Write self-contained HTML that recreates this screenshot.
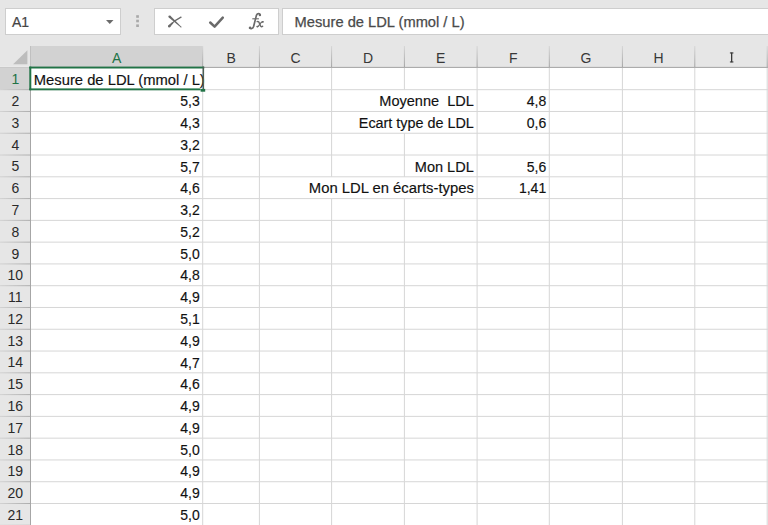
<!DOCTYPE html><html><head><meta charset="utf-8"><style>html,body{margin:0;padding:0;background:#e6e6e6;overflow:hidden}svg{display:block}text{font-family:"Liberation Sans",sans-serif}</style></head><body>
<svg width="768" height="525" viewBox="0 0 768 525">
<defs><linearGradient id="sepg" x1="0" y1="0" x2="0" y2="1"><stop offset="0" stop-color="#d6d6d6"/><stop offset="1" stop-color="#a2a2a2"/></linearGradient><linearGradient id="rsepg" x1="0" y1="0" x2="1" y2="0"><stop offset="0" stop-color="#d2d2d2"/><stop offset="1" stop-color="#acacac"/></linearGradient></defs>
<rect x="0" y="0" width="768" height="525" fill="#e6e6e6"/>
<rect x="5.5" y="8.5" width="115" height="26" fill="#fff" stroke="#cecece" stroke-width="1"/>
<text x="12" y="26.7" font-size="14" fill="#444" stroke="#444" stroke-width="0.2">A1</text>
<path d="M106 20 L113.5 20 L109.75 24 Z" fill="#6b6b6b"/>
<rect x="136.2" y="15.2" width="2.7" height="2.6" fill="#a9a9a9"/>
<rect x="136.2" y="19.7" width="2.7" height="2.6" fill="#a9a9a9"/>
<rect x="136.2" y="24.4" width="2.7" height="2.6" fill="#a9a9a9"/>
<rect x="154.5" y="8.5" width="124" height="26" fill="#fff" stroke="#cecece" stroke-width="1"/>
<path d="M168.79 17.49 L180.66 27.37 L181.34 26.63 L170.41 15.71Z" fill="#6a6a6a"/>
<circle cx="169.6" cy="16.6" r="1.2" fill="#6a6a6a"/>
<circle cx="181.0" cy="27.0" r="0.5" fill="#6a6a6a"/>
<path d="M169.2 26.2 Q174 20.5 181.0 17.2" stroke="#6a6a6a" stroke-width="1.4" fill="none" stroke-linecap="round"/>
<path d="M170.04 27.06 L173.06 23.57 L171.94 22.43 L168.36 25.34Z" fill="#6a6a6a"/>
<circle cx="169.2" cy="26.2" r="1.2" fill="#6a6a6a"/>
<circle cx="172.5" cy="23.0" r="0.8" fill="#6a6a6a"/>
<path d="M210.2 22.5 L214.6 26.6 L222.8 17.6" stroke="#6a6a6a" stroke-width="2.5" fill="none" stroke-linejoin="round" stroke-linecap="round"/>
<path d="M260.2 15.0 C260.0 13.2 257.4 12.9 256.4 15.4 L253.6 26.4 C252.8 28.8 250.8 29.2 249.6 28.0" stroke="#6a6a6a" stroke-width="1.7" fill="none" stroke-linecap="round"/>
<circle cx="259.9" cy="15.1" r="1.2" fill="#6a6a6a"/><circle cx="250.1" cy="27.8" r="1.2" fill="#6a6a6a"/>
<path d="M252.3 18.8 L258.9 18.8" stroke="#6a6a6a" stroke-width="1.1"/>
<path d="M257.2 21.6 C258.4 21.2 259.0 22.0 259.5 23.4 L260.6 26.0 C261.0 26.9 261.8 27.0 262.6 26.2" stroke="#6a6a6a" stroke-width="1.5" fill="none" stroke-linecap="round"/>
<path d="M263.0 21.6 C261.8 21.4 260.2 23.4 258.8 25.6 C258.2 26.6 257.6 27.0 257.0 26.4" stroke="#6a6a6a" stroke-width="1.1" fill="none" stroke-linecap="round"/>
<circle cx="262.8" cy="21.9" r="0.9" fill="#6a6a6a"/><circle cx="257.4" cy="26.6" r="0.9" fill="#6a6a6a"/>
<rect x="282.5" y="8.5" width="500" height="26" fill="#fff" stroke="#cecece" stroke-width="1"/>
<text x="294.6" y="27.4" font-size="14" fill="#4a4a4a" stroke="#4a4a4a" stroke-width="0.25" textLength="170" lengthAdjust="spacingAndGlyphs">Mesure de LDL (mmol / L)</text>
<rect x="30.5" y="67.0" width="768" height="525" fill="#fff"/>
<rect x="30.5" y="46.0" width="172.2" height="21.0" fill="#d2d2d2"/>
<rect x="0" y="67.9" width="30.5" height="21.78" fill="#d2d2d2"/>
<path d="M27.4 50.3 L27.4 64.2 L13.1 64.2 Z" fill="#bdbdbd"/>
<line x1="202.7" y1="67.9" x2="202.7" y2="89.68" stroke="#d6d6d6" stroke-width="1"/>
<line x1="202.7" y1="89.68" x2="202.7" y2="111.46000000000001" stroke="#d6d6d6" stroke-width="1"/>
<line x1="202.7" y1="111.46000000000001" x2="202.7" y2="133.24" stroke="#d6d6d6" stroke-width="1"/>
<line x1="202.7" y1="133.24" x2="202.7" y2="155.02" stroke="#d6d6d6" stroke-width="1"/>
<line x1="202.7" y1="155.02" x2="202.7" y2="176.8" stroke="#d6d6d6" stroke-width="1"/>
<line x1="202.7" y1="176.8" x2="202.7" y2="198.58" stroke="#d6d6d6" stroke-width="1"/>
<line x1="202.7" y1="198.58" x2="202.7" y2="220.36" stroke="#d6d6d6" stroke-width="1"/>
<line x1="202.7" y1="220.36" x2="202.7" y2="242.14000000000001" stroke="#d6d6d6" stroke-width="1"/>
<line x1="202.7" y1="242.14000000000001" x2="202.7" y2="263.92" stroke="#d6d6d6" stroke-width="1"/>
<line x1="202.7" y1="263.92" x2="202.7" y2="285.70000000000005" stroke="#d6d6d6" stroke-width="1"/>
<line x1="202.7" y1="285.70000000000005" x2="202.7" y2="307.48" stroke="#d6d6d6" stroke-width="1"/>
<line x1="202.7" y1="307.48" x2="202.7" y2="329.26" stroke="#d6d6d6" stroke-width="1"/>
<line x1="202.7" y1="329.26" x2="202.7" y2="351.03999999999996" stroke="#d6d6d6" stroke-width="1"/>
<line x1="202.7" y1="351.03999999999996" x2="202.7" y2="372.82000000000005" stroke="#d6d6d6" stroke-width="1"/>
<line x1="202.7" y1="372.82000000000005" x2="202.7" y2="394.6" stroke="#d6d6d6" stroke-width="1"/>
<line x1="202.7" y1="394.6" x2="202.7" y2="416.38" stroke="#d6d6d6" stroke-width="1"/>
<line x1="202.7" y1="416.38" x2="202.7" y2="438.15999999999997" stroke="#d6d6d6" stroke-width="1"/>
<line x1="202.7" y1="438.15999999999997" x2="202.7" y2="459.94000000000005" stroke="#d6d6d6" stroke-width="1"/>
<line x1="202.7" y1="459.94000000000005" x2="202.7" y2="481.72" stroke="#d6d6d6" stroke-width="1"/>
<line x1="202.7" y1="481.72" x2="202.7" y2="503.5" stroke="#d6d6d6" stroke-width="1"/>
<line x1="202.7" y1="503.5" x2="202.7" y2="525.28" stroke="#d6d6d6" stroke-width="1"/>
<line x1="202.7" y1="525.28" x2="202.7" y2="547.0600000000001" stroke="#d6d6d6" stroke-width="1"/>
<line x1="259.4" y1="67.9" x2="259.4" y2="89.68" stroke="#d6d6d6" stroke-width="1"/>
<line x1="259.4" y1="89.68" x2="259.4" y2="111.46000000000001" stroke="#d6d6d6" stroke-width="1"/>
<line x1="259.4" y1="111.46000000000001" x2="259.4" y2="133.24" stroke="#d6d6d6" stroke-width="1"/>
<line x1="259.4" y1="133.24" x2="259.4" y2="155.02" stroke="#d6d6d6" stroke-width="1"/>
<line x1="259.4" y1="155.02" x2="259.4" y2="176.8" stroke="#d6d6d6" stroke-width="1"/>
<line x1="259.4" y1="176.8" x2="259.4" y2="198.58" stroke="#d6d6d6" stroke-width="1"/>
<line x1="259.4" y1="198.58" x2="259.4" y2="220.36" stroke="#d6d6d6" stroke-width="1"/>
<line x1="259.4" y1="220.36" x2="259.4" y2="242.14000000000001" stroke="#d6d6d6" stroke-width="1"/>
<line x1="259.4" y1="242.14000000000001" x2="259.4" y2="263.92" stroke="#d6d6d6" stroke-width="1"/>
<line x1="259.4" y1="263.92" x2="259.4" y2="285.70000000000005" stroke="#d6d6d6" stroke-width="1"/>
<line x1="259.4" y1="285.70000000000005" x2="259.4" y2="307.48" stroke="#d6d6d6" stroke-width="1"/>
<line x1="259.4" y1="307.48" x2="259.4" y2="329.26" stroke="#d6d6d6" stroke-width="1"/>
<line x1="259.4" y1="329.26" x2="259.4" y2="351.03999999999996" stroke="#d6d6d6" stroke-width="1"/>
<line x1="259.4" y1="351.03999999999996" x2="259.4" y2="372.82000000000005" stroke="#d6d6d6" stroke-width="1"/>
<line x1="259.4" y1="372.82000000000005" x2="259.4" y2="394.6" stroke="#d6d6d6" stroke-width="1"/>
<line x1="259.4" y1="394.6" x2="259.4" y2="416.38" stroke="#d6d6d6" stroke-width="1"/>
<line x1="259.4" y1="416.38" x2="259.4" y2="438.15999999999997" stroke="#d6d6d6" stroke-width="1"/>
<line x1="259.4" y1="438.15999999999997" x2="259.4" y2="459.94000000000005" stroke="#d6d6d6" stroke-width="1"/>
<line x1="259.4" y1="459.94000000000005" x2="259.4" y2="481.72" stroke="#d6d6d6" stroke-width="1"/>
<line x1="259.4" y1="481.72" x2="259.4" y2="503.5" stroke="#d6d6d6" stroke-width="1"/>
<line x1="259.4" y1="503.5" x2="259.4" y2="525.28" stroke="#d6d6d6" stroke-width="1"/>
<line x1="259.4" y1="525.28" x2="259.4" y2="547.0600000000001" stroke="#d6d6d6" stroke-width="1"/>
<line x1="331.6" y1="67.9" x2="331.6" y2="89.68" stroke="#d6d6d6" stroke-width="1"/>
<line x1="331.6" y1="89.68" x2="331.6" y2="111.46000000000001" stroke="#d6d6d6" stroke-width="1"/>
<line x1="331.6" y1="111.46000000000001" x2="331.6" y2="133.24" stroke="#d6d6d6" stroke-width="1"/>
<line x1="331.6" y1="133.24" x2="331.6" y2="155.02" stroke="#d6d6d6" stroke-width="1"/>
<line x1="331.6" y1="155.02" x2="331.6" y2="176.8" stroke="#d6d6d6" stroke-width="1"/>
<line x1="331.6" y1="198.58" x2="331.6" y2="220.36" stroke="#d6d6d6" stroke-width="1"/>
<line x1="331.6" y1="220.36" x2="331.6" y2="242.14000000000001" stroke="#d6d6d6" stroke-width="1"/>
<line x1="331.6" y1="242.14000000000001" x2="331.6" y2="263.92" stroke="#d6d6d6" stroke-width="1"/>
<line x1="331.6" y1="263.92" x2="331.6" y2="285.70000000000005" stroke="#d6d6d6" stroke-width="1"/>
<line x1="331.6" y1="285.70000000000005" x2="331.6" y2="307.48" stroke="#d6d6d6" stroke-width="1"/>
<line x1="331.6" y1="307.48" x2="331.6" y2="329.26" stroke="#d6d6d6" stroke-width="1"/>
<line x1="331.6" y1="329.26" x2="331.6" y2="351.03999999999996" stroke="#d6d6d6" stroke-width="1"/>
<line x1="331.6" y1="351.03999999999996" x2="331.6" y2="372.82000000000005" stroke="#d6d6d6" stroke-width="1"/>
<line x1="331.6" y1="372.82000000000005" x2="331.6" y2="394.6" stroke="#d6d6d6" stroke-width="1"/>
<line x1="331.6" y1="394.6" x2="331.6" y2="416.38" stroke="#d6d6d6" stroke-width="1"/>
<line x1="331.6" y1="416.38" x2="331.6" y2="438.15999999999997" stroke="#d6d6d6" stroke-width="1"/>
<line x1="331.6" y1="438.15999999999997" x2="331.6" y2="459.94000000000005" stroke="#d6d6d6" stroke-width="1"/>
<line x1="331.6" y1="459.94000000000005" x2="331.6" y2="481.72" stroke="#d6d6d6" stroke-width="1"/>
<line x1="331.6" y1="481.72" x2="331.6" y2="503.5" stroke="#d6d6d6" stroke-width="1"/>
<line x1="331.6" y1="503.5" x2="331.6" y2="525.28" stroke="#d6d6d6" stroke-width="1"/>
<line x1="331.6" y1="525.28" x2="331.6" y2="547.0600000000001" stroke="#d6d6d6" stroke-width="1"/>
<line x1="404.4" y1="67.9" x2="404.4" y2="89.68" stroke="#d6d6d6" stroke-width="1"/>
<line x1="404.4" y1="133.24" x2="404.4" y2="155.02" stroke="#d6d6d6" stroke-width="1"/>
<line x1="404.4" y1="155.02" x2="404.4" y2="176.8" stroke="#d6d6d6" stroke-width="1"/>
<line x1="404.4" y1="198.58" x2="404.4" y2="220.36" stroke="#d6d6d6" stroke-width="1"/>
<line x1="404.4" y1="220.36" x2="404.4" y2="242.14000000000001" stroke="#d6d6d6" stroke-width="1"/>
<line x1="404.4" y1="242.14000000000001" x2="404.4" y2="263.92" stroke="#d6d6d6" stroke-width="1"/>
<line x1="404.4" y1="263.92" x2="404.4" y2="285.70000000000005" stroke="#d6d6d6" stroke-width="1"/>
<line x1="404.4" y1="285.70000000000005" x2="404.4" y2="307.48" stroke="#d6d6d6" stroke-width="1"/>
<line x1="404.4" y1="307.48" x2="404.4" y2="329.26" stroke="#d6d6d6" stroke-width="1"/>
<line x1="404.4" y1="329.26" x2="404.4" y2="351.03999999999996" stroke="#d6d6d6" stroke-width="1"/>
<line x1="404.4" y1="351.03999999999996" x2="404.4" y2="372.82000000000005" stroke="#d6d6d6" stroke-width="1"/>
<line x1="404.4" y1="372.82000000000005" x2="404.4" y2="394.6" stroke="#d6d6d6" stroke-width="1"/>
<line x1="404.4" y1="394.6" x2="404.4" y2="416.38" stroke="#d6d6d6" stroke-width="1"/>
<line x1="404.4" y1="416.38" x2="404.4" y2="438.15999999999997" stroke="#d6d6d6" stroke-width="1"/>
<line x1="404.4" y1="438.15999999999997" x2="404.4" y2="459.94000000000005" stroke="#d6d6d6" stroke-width="1"/>
<line x1="404.4" y1="459.94000000000005" x2="404.4" y2="481.72" stroke="#d6d6d6" stroke-width="1"/>
<line x1="404.4" y1="481.72" x2="404.4" y2="503.5" stroke="#d6d6d6" stroke-width="1"/>
<line x1="404.4" y1="503.5" x2="404.4" y2="525.28" stroke="#d6d6d6" stroke-width="1"/>
<line x1="404.4" y1="525.28" x2="404.4" y2="547.0600000000001" stroke="#d6d6d6" stroke-width="1"/>
<line x1="477.1" y1="67.9" x2="477.1" y2="89.68" stroke="#d6d6d6" stroke-width="1"/>
<line x1="477.1" y1="89.68" x2="477.1" y2="111.46000000000001" stroke="#d6d6d6" stroke-width="1"/>
<line x1="477.1" y1="111.46000000000001" x2="477.1" y2="133.24" stroke="#d6d6d6" stroke-width="1"/>
<line x1="477.1" y1="133.24" x2="477.1" y2="155.02" stroke="#d6d6d6" stroke-width="1"/>
<line x1="477.1" y1="155.02" x2="477.1" y2="176.8" stroke="#d6d6d6" stroke-width="1"/>
<line x1="477.1" y1="176.8" x2="477.1" y2="198.58" stroke="#d6d6d6" stroke-width="1"/>
<line x1="477.1" y1="198.58" x2="477.1" y2="220.36" stroke="#d6d6d6" stroke-width="1"/>
<line x1="477.1" y1="220.36" x2="477.1" y2="242.14000000000001" stroke="#d6d6d6" stroke-width="1"/>
<line x1="477.1" y1="242.14000000000001" x2="477.1" y2="263.92" stroke="#d6d6d6" stroke-width="1"/>
<line x1="477.1" y1="263.92" x2="477.1" y2="285.70000000000005" stroke="#d6d6d6" stroke-width="1"/>
<line x1="477.1" y1="285.70000000000005" x2="477.1" y2="307.48" stroke="#d6d6d6" stroke-width="1"/>
<line x1="477.1" y1="307.48" x2="477.1" y2="329.26" stroke="#d6d6d6" stroke-width="1"/>
<line x1="477.1" y1="329.26" x2="477.1" y2="351.03999999999996" stroke="#d6d6d6" stroke-width="1"/>
<line x1="477.1" y1="351.03999999999996" x2="477.1" y2="372.82000000000005" stroke="#d6d6d6" stroke-width="1"/>
<line x1="477.1" y1="372.82000000000005" x2="477.1" y2="394.6" stroke="#d6d6d6" stroke-width="1"/>
<line x1="477.1" y1="394.6" x2="477.1" y2="416.38" stroke="#d6d6d6" stroke-width="1"/>
<line x1="477.1" y1="416.38" x2="477.1" y2="438.15999999999997" stroke="#d6d6d6" stroke-width="1"/>
<line x1="477.1" y1="438.15999999999997" x2="477.1" y2="459.94000000000005" stroke="#d6d6d6" stroke-width="1"/>
<line x1="477.1" y1="459.94000000000005" x2="477.1" y2="481.72" stroke="#d6d6d6" stroke-width="1"/>
<line x1="477.1" y1="481.72" x2="477.1" y2="503.5" stroke="#d6d6d6" stroke-width="1"/>
<line x1="477.1" y1="503.5" x2="477.1" y2="525.28" stroke="#d6d6d6" stroke-width="1"/>
<line x1="477.1" y1="525.28" x2="477.1" y2="547.0600000000001" stroke="#d6d6d6" stroke-width="1"/>
<line x1="549.3" y1="67.9" x2="549.3" y2="89.68" stroke="#d6d6d6" stroke-width="1"/>
<line x1="549.3" y1="89.68" x2="549.3" y2="111.46000000000001" stroke="#d6d6d6" stroke-width="1"/>
<line x1="549.3" y1="111.46000000000001" x2="549.3" y2="133.24" stroke="#d6d6d6" stroke-width="1"/>
<line x1="549.3" y1="133.24" x2="549.3" y2="155.02" stroke="#d6d6d6" stroke-width="1"/>
<line x1="549.3" y1="155.02" x2="549.3" y2="176.8" stroke="#d6d6d6" stroke-width="1"/>
<line x1="549.3" y1="176.8" x2="549.3" y2="198.58" stroke="#d6d6d6" stroke-width="1"/>
<line x1="549.3" y1="198.58" x2="549.3" y2="220.36" stroke="#d6d6d6" stroke-width="1"/>
<line x1="549.3" y1="220.36" x2="549.3" y2="242.14000000000001" stroke="#d6d6d6" stroke-width="1"/>
<line x1="549.3" y1="242.14000000000001" x2="549.3" y2="263.92" stroke="#d6d6d6" stroke-width="1"/>
<line x1="549.3" y1="263.92" x2="549.3" y2="285.70000000000005" stroke="#d6d6d6" stroke-width="1"/>
<line x1="549.3" y1="285.70000000000005" x2="549.3" y2="307.48" stroke="#d6d6d6" stroke-width="1"/>
<line x1="549.3" y1="307.48" x2="549.3" y2="329.26" stroke="#d6d6d6" stroke-width="1"/>
<line x1="549.3" y1="329.26" x2="549.3" y2="351.03999999999996" stroke="#d6d6d6" stroke-width="1"/>
<line x1="549.3" y1="351.03999999999996" x2="549.3" y2="372.82000000000005" stroke="#d6d6d6" stroke-width="1"/>
<line x1="549.3" y1="372.82000000000005" x2="549.3" y2="394.6" stroke="#d6d6d6" stroke-width="1"/>
<line x1="549.3" y1="394.6" x2="549.3" y2="416.38" stroke="#d6d6d6" stroke-width="1"/>
<line x1="549.3" y1="416.38" x2="549.3" y2="438.15999999999997" stroke="#d6d6d6" stroke-width="1"/>
<line x1="549.3" y1="438.15999999999997" x2="549.3" y2="459.94000000000005" stroke="#d6d6d6" stroke-width="1"/>
<line x1="549.3" y1="459.94000000000005" x2="549.3" y2="481.72" stroke="#d6d6d6" stroke-width="1"/>
<line x1="549.3" y1="481.72" x2="549.3" y2="503.5" stroke="#d6d6d6" stroke-width="1"/>
<line x1="549.3" y1="503.5" x2="549.3" y2="525.28" stroke="#d6d6d6" stroke-width="1"/>
<line x1="549.3" y1="525.28" x2="549.3" y2="547.0600000000001" stroke="#d6d6d6" stroke-width="1"/>
<line x1="622.4" y1="67.9" x2="622.4" y2="89.68" stroke="#d6d6d6" stroke-width="1"/>
<line x1="622.4" y1="89.68" x2="622.4" y2="111.46000000000001" stroke="#d6d6d6" stroke-width="1"/>
<line x1="622.4" y1="111.46000000000001" x2="622.4" y2="133.24" stroke="#d6d6d6" stroke-width="1"/>
<line x1="622.4" y1="133.24" x2="622.4" y2="155.02" stroke="#d6d6d6" stroke-width="1"/>
<line x1="622.4" y1="155.02" x2="622.4" y2="176.8" stroke="#d6d6d6" stroke-width="1"/>
<line x1="622.4" y1="176.8" x2="622.4" y2="198.58" stroke="#d6d6d6" stroke-width="1"/>
<line x1="622.4" y1="198.58" x2="622.4" y2="220.36" stroke="#d6d6d6" stroke-width="1"/>
<line x1="622.4" y1="220.36" x2="622.4" y2="242.14000000000001" stroke="#d6d6d6" stroke-width="1"/>
<line x1="622.4" y1="242.14000000000001" x2="622.4" y2="263.92" stroke="#d6d6d6" stroke-width="1"/>
<line x1="622.4" y1="263.92" x2="622.4" y2="285.70000000000005" stroke="#d6d6d6" stroke-width="1"/>
<line x1="622.4" y1="285.70000000000005" x2="622.4" y2="307.48" stroke="#d6d6d6" stroke-width="1"/>
<line x1="622.4" y1="307.48" x2="622.4" y2="329.26" stroke="#d6d6d6" stroke-width="1"/>
<line x1="622.4" y1="329.26" x2="622.4" y2="351.03999999999996" stroke="#d6d6d6" stroke-width="1"/>
<line x1="622.4" y1="351.03999999999996" x2="622.4" y2="372.82000000000005" stroke="#d6d6d6" stroke-width="1"/>
<line x1="622.4" y1="372.82000000000005" x2="622.4" y2="394.6" stroke="#d6d6d6" stroke-width="1"/>
<line x1="622.4" y1="394.6" x2="622.4" y2="416.38" stroke="#d6d6d6" stroke-width="1"/>
<line x1="622.4" y1="416.38" x2="622.4" y2="438.15999999999997" stroke="#d6d6d6" stroke-width="1"/>
<line x1="622.4" y1="438.15999999999997" x2="622.4" y2="459.94000000000005" stroke="#d6d6d6" stroke-width="1"/>
<line x1="622.4" y1="459.94000000000005" x2="622.4" y2="481.72" stroke="#d6d6d6" stroke-width="1"/>
<line x1="622.4" y1="481.72" x2="622.4" y2="503.5" stroke="#d6d6d6" stroke-width="1"/>
<line x1="622.4" y1="503.5" x2="622.4" y2="525.28" stroke="#d6d6d6" stroke-width="1"/>
<line x1="622.4" y1="525.28" x2="622.4" y2="547.0600000000001" stroke="#d6d6d6" stroke-width="1"/>
<line x1="694.8" y1="67.9" x2="694.8" y2="89.68" stroke="#d6d6d6" stroke-width="1"/>
<line x1="694.8" y1="89.68" x2="694.8" y2="111.46000000000001" stroke="#d6d6d6" stroke-width="1"/>
<line x1="694.8" y1="111.46000000000001" x2="694.8" y2="133.24" stroke="#d6d6d6" stroke-width="1"/>
<line x1="694.8" y1="133.24" x2="694.8" y2="155.02" stroke="#d6d6d6" stroke-width="1"/>
<line x1="694.8" y1="155.02" x2="694.8" y2="176.8" stroke="#d6d6d6" stroke-width="1"/>
<line x1="694.8" y1="176.8" x2="694.8" y2="198.58" stroke="#d6d6d6" stroke-width="1"/>
<line x1="694.8" y1="198.58" x2="694.8" y2="220.36" stroke="#d6d6d6" stroke-width="1"/>
<line x1="694.8" y1="220.36" x2="694.8" y2="242.14000000000001" stroke="#d6d6d6" stroke-width="1"/>
<line x1="694.8" y1="242.14000000000001" x2="694.8" y2="263.92" stroke="#d6d6d6" stroke-width="1"/>
<line x1="694.8" y1="263.92" x2="694.8" y2="285.70000000000005" stroke="#d6d6d6" stroke-width="1"/>
<line x1="694.8" y1="285.70000000000005" x2="694.8" y2="307.48" stroke="#d6d6d6" stroke-width="1"/>
<line x1="694.8" y1="307.48" x2="694.8" y2="329.26" stroke="#d6d6d6" stroke-width="1"/>
<line x1="694.8" y1="329.26" x2="694.8" y2="351.03999999999996" stroke="#d6d6d6" stroke-width="1"/>
<line x1="694.8" y1="351.03999999999996" x2="694.8" y2="372.82000000000005" stroke="#d6d6d6" stroke-width="1"/>
<line x1="694.8" y1="372.82000000000005" x2="694.8" y2="394.6" stroke="#d6d6d6" stroke-width="1"/>
<line x1="694.8" y1="394.6" x2="694.8" y2="416.38" stroke="#d6d6d6" stroke-width="1"/>
<line x1="694.8" y1="416.38" x2="694.8" y2="438.15999999999997" stroke="#d6d6d6" stroke-width="1"/>
<line x1="694.8" y1="438.15999999999997" x2="694.8" y2="459.94000000000005" stroke="#d6d6d6" stroke-width="1"/>
<line x1="694.8" y1="459.94000000000005" x2="694.8" y2="481.72" stroke="#d6d6d6" stroke-width="1"/>
<line x1="694.8" y1="481.72" x2="694.8" y2="503.5" stroke="#d6d6d6" stroke-width="1"/>
<line x1="694.8" y1="503.5" x2="694.8" y2="525.28" stroke="#d6d6d6" stroke-width="1"/>
<line x1="694.8" y1="525.28" x2="694.8" y2="547.0600000000001" stroke="#d6d6d6" stroke-width="1"/>
<line x1="767.2" y1="67.9" x2="767.2" y2="89.68" stroke="#d6d6d6" stroke-width="1"/>
<line x1="767.2" y1="89.68" x2="767.2" y2="111.46000000000001" stroke="#d6d6d6" stroke-width="1"/>
<line x1="767.2" y1="111.46000000000001" x2="767.2" y2="133.24" stroke="#d6d6d6" stroke-width="1"/>
<line x1="767.2" y1="133.24" x2="767.2" y2="155.02" stroke="#d6d6d6" stroke-width="1"/>
<line x1="767.2" y1="155.02" x2="767.2" y2="176.8" stroke="#d6d6d6" stroke-width="1"/>
<line x1="767.2" y1="176.8" x2="767.2" y2="198.58" stroke="#d6d6d6" stroke-width="1"/>
<line x1="767.2" y1="198.58" x2="767.2" y2="220.36" stroke="#d6d6d6" stroke-width="1"/>
<line x1="767.2" y1="220.36" x2="767.2" y2="242.14000000000001" stroke="#d6d6d6" stroke-width="1"/>
<line x1="767.2" y1="242.14000000000001" x2="767.2" y2="263.92" stroke="#d6d6d6" stroke-width="1"/>
<line x1="767.2" y1="263.92" x2="767.2" y2="285.70000000000005" stroke="#d6d6d6" stroke-width="1"/>
<line x1="767.2" y1="285.70000000000005" x2="767.2" y2="307.48" stroke="#d6d6d6" stroke-width="1"/>
<line x1="767.2" y1="307.48" x2="767.2" y2="329.26" stroke="#d6d6d6" stroke-width="1"/>
<line x1="767.2" y1="329.26" x2="767.2" y2="351.03999999999996" stroke="#d6d6d6" stroke-width="1"/>
<line x1="767.2" y1="351.03999999999996" x2="767.2" y2="372.82000000000005" stroke="#d6d6d6" stroke-width="1"/>
<line x1="767.2" y1="372.82000000000005" x2="767.2" y2="394.6" stroke="#d6d6d6" stroke-width="1"/>
<line x1="767.2" y1="394.6" x2="767.2" y2="416.38" stroke="#d6d6d6" stroke-width="1"/>
<line x1="767.2" y1="416.38" x2="767.2" y2="438.15999999999997" stroke="#d6d6d6" stroke-width="1"/>
<line x1="767.2" y1="438.15999999999997" x2="767.2" y2="459.94000000000005" stroke="#d6d6d6" stroke-width="1"/>
<line x1="767.2" y1="459.94000000000005" x2="767.2" y2="481.72" stroke="#d6d6d6" stroke-width="1"/>
<line x1="767.2" y1="481.72" x2="767.2" y2="503.5" stroke="#d6d6d6" stroke-width="1"/>
<line x1="767.2" y1="503.5" x2="767.2" y2="525.28" stroke="#d6d6d6" stroke-width="1"/>
<line x1="767.2" y1="525.28" x2="767.2" y2="547.0600000000001" stroke="#d6d6d6" stroke-width="1"/>
<line x1="30.5" y1="89.68" x2="768" y2="89.68" stroke="#d6d6d6" stroke-width="1"/>
<line x1="30.5" y1="111.46000000000001" x2="768" y2="111.46000000000001" stroke="#d6d6d6" stroke-width="1"/>
<line x1="30.5" y1="133.24" x2="768" y2="133.24" stroke="#d6d6d6" stroke-width="1"/>
<line x1="30.5" y1="155.02" x2="768" y2="155.02" stroke="#d6d6d6" stroke-width="1"/>
<line x1="30.5" y1="176.8" x2="768" y2="176.8" stroke="#d6d6d6" stroke-width="1"/>
<line x1="30.5" y1="198.58" x2="768" y2="198.58" stroke="#d6d6d6" stroke-width="1"/>
<line x1="30.5" y1="220.36" x2="768" y2="220.36" stroke="#d6d6d6" stroke-width="1"/>
<line x1="30.5" y1="242.14000000000001" x2="768" y2="242.14000000000001" stroke="#d6d6d6" stroke-width="1"/>
<line x1="30.5" y1="263.92" x2="768" y2="263.92" stroke="#d6d6d6" stroke-width="1"/>
<line x1="30.5" y1="285.70000000000005" x2="768" y2="285.70000000000005" stroke="#d6d6d6" stroke-width="1"/>
<line x1="30.5" y1="307.48" x2="768" y2="307.48" stroke="#d6d6d6" stroke-width="1"/>
<line x1="30.5" y1="329.26" x2="768" y2="329.26" stroke="#d6d6d6" stroke-width="1"/>
<line x1="30.5" y1="351.03999999999996" x2="768" y2="351.03999999999996" stroke="#d6d6d6" stroke-width="1"/>
<line x1="30.5" y1="372.82000000000005" x2="768" y2="372.82000000000005" stroke="#d6d6d6" stroke-width="1"/>
<line x1="30.5" y1="394.6" x2="768" y2="394.6" stroke="#d6d6d6" stroke-width="1"/>
<line x1="30.5" y1="416.38" x2="768" y2="416.38" stroke="#d6d6d6" stroke-width="1"/>
<line x1="30.5" y1="438.15999999999997" x2="768" y2="438.15999999999997" stroke="#d6d6d6" stroke-width="1"/>
<line x1="30.5" y1="459.94000000000005" x2="768" y2="459.94000000000005" stroke="#d6d6d6" stroke-width="1"/>
<line x1="30.5" y1="481.72" x2="768" y2="481.72" stroke="#d6d6d6" stroke-width="1"/>
<line x1="30.5" y1="503.5" x2="768" y2="503.5" stroke="#d6d6d6" stroke-width="1"/>
<rect x="0" y="89.18" width="30.5" height="1" fill="url(#rsepg)"/>
<rect x="0" y="110.96000000000001" width="30.5" height="1" fill="url(#rsepg)"/>
<rect x="0" y="132.74" width="30.5" height="1" fill="url(#rsepg)"/>
<rect x="0" y="154.52" width="30.5" height="1" fill="url(#rsepg)"/>
<rect x="0" y="176.3" width="30.5" height="1" fill="url(#rsepg)"/>
<rect x="0" y="198.08" width="30.5" height="1" fill="url(#rsepg)"/>
<rect x="0" y="219.86" width="30.5" height="1" fill="url(#rsepg)"/>
<rect x="0" y="241.64000000000001" width="30.5" height="1" fill="url(#rsepg)"/>
<rect x="0" y="263.42" width="30.5" height="1" fill="url(#rsepg)"/>
<rect x="0" y="285.20000000000005" width="30.5" height="1" fill="url(#rsepg)"/>
<rect x="0" y="306.98" width="30.5" height="1" fill="url(#rsepg)"/>
<rect x="0" y="328.76" width="30.5" height="1" fill="url(#rsepg)"/>
<rect x="0" y="350.53999999999996" width="30.5" height="1" fill="url(#rsepg)"/>
<rect x="0" y="372.32000000000005" width="30.5" height="1" fill="url(#rsepg)"/>
<rect x="0" y="394.1" width="30.5" height="1" fill="url(#rsepg)"/>
<rect x="0" y="415.88" width="30.5" height="1" fill="url(#rsepg)"/>
<rect x="0" y="437.65999999999997" width="30.5" height="1" fill="url(#rsepg)"/>
<rect x="0" y="459.44000000000005" width="30.5" height="1" fill="url(#rsepg)"/>
<rect x="0" y="481.22" width="30.5" height="1" fill="url(#rsepg)"/>
<rect x="0" y="503.0" width="30.5" height="1" fill="url(#rsepg)"/>
<rect x="0" y="524.78" width="30.5" height="1" fill="url(#rsepg)"/>
<rect x="0" y="546.5600000000001" width="30.5" height="1" fill="url(#rsepg)"/>
<rect x="202.2" y="46.0" width="1" height="21.0" fill="url(#sepg)"/>
<rect x="258.9" y="46.0" width="1" height="21.0" fill="url(#sepg)"/>
<rect x="331.1" y="46.0" width="1" height="21.0" fill="url(#sepg)"/>
<rect x="403.9" y="46.0" width="1" height="21.0" fill="url(#sepg)"/>
<rect x="476.6" y="46.0" width="1" height="21.0" fill="url(#sepg)"/>
<rect x="548.8" y="46.0" width="1" height="21.0" fill="url(#sepg)"/>
<rect x="621.9" y="46.0" width="1" height="21.0" fill="url(#sepg)"/>
<rect x="694.3" y="46.0" width="1" height="21.0" fill="url(#sepg)"/>
<rect x="766.7" y="46.0" width="1" height="21.0" fill="url(#sepg)"/>
<line x1="30.5" y1="67.4" x2="768" y2="67.4" stroke="#a3a3a3" stroke-width="1"/>
<line x1="0" y1="66.4" x2="30.5" y2="66.4" stroke="#ededed" stroke-width="1"/>
<line x1="0" y1="67.4" x2="30.5" y2="67.4" stroke="#c6c6c6" stroke-width="1"/>
<line x1="30.5" y1="46.0" x2="30.5" y2="67.0" stroke="#c0c0c0" stroke-width="1"/>
<line x1="30.5" y1="67.0" x2="30.5" y2="525" stroke="#a6a6a6" stroke-width="1"/>
<text transform="translate(116.60,62.6) scale(1,1.08)" font-size="14" fill="#217346" text-anchor="middle">A</text>
<text transform="translate(231.05,62.6) scale(1,1.08)" font-size="14" fill="#383838" text-anchor="middle">B</text>
<text transform="translate(295.50,62.6) scale(1,1.08)" font-size="14" fill="#383838" text-anchor="middle">C</text>
<text transform="translate(368.00,62.6) scale(1,1.08)" font-size="14" fill="#383838" text-anchor="middle">D</text>
<text transform="translate(440.75,62.6) scale(1,1.08)" font-size="14" fill="#383838" text-anchor="middle">E</text>
<text transform="translate(513.20,62.6) scale(1,1.08)" font-size="14" fill="#383838" text-anchor="middle">F</text>
<text transform="translate(585.85,62.6) scale(1,1.08)" font-size="14" fill="#383838" text-anchor="middle">G</text>
<text transform="translate(658.60,62.6) scale(1,1.08)" font-size="14" fill="#383838" text-anchor="middle">H</text>
<rect x="731.0" y="52.6" width="1.3" height="9.6" fill="#383838"/><rect x="729.9" y="52.4" width="3.5" height="1.1" fill="#383838"/><rect x="729.9" y="61.4" width="3.5" height="1.1" fill="#383838"/>
<text transform="translate(15.3,84.28) scale(1,1.08)" font-size="14" fill="#217346" text-anchor="middle">1</text>
<text transform="translate(15.3,106.06) scale(1,1.08)" font-size="14" fill="#2a2a2a" text-anchor="middle">2</text>
<text transform="translate(15.3,127.84) scale(1,1.08)" font-size="14" fill="#2a2a2a" text-anchor="middle">3</text>
<text transform="translate(15.3,149.62) scale(1,1.08)" font-size="14" fill="#2a2a2a" text-anchor="middle">4</text>
<text transform="translate(15.3,171.40) scale(1,1.08)" font-size="14" fill="#2a2a2a" text-anchor="middle">5</text>
<text transform="translate(15.3,193.18) scale(1,1.08)" font-size="14" fill="#2a2a2a" text-anchor="middle">6</text>
<text transform="translate(15.3,214.96) scale(1,1.08)" font-size="14" fill="#2a2a2a" text-anchor="middle">7</text>
<text transform="translate(15.3,236.74) scale(1,1.08)" font-size="14" fill="#2a2a2a" text-anchor="middle">8</text>
<text transform="translate(15.3,258.52) scale(1,1.08)" font-size="14" fill="#2a2a2a" text-anchor="middle">9</text>
<text transform="translate(15.3,280.30) scale(1,1.08)" font-size="14" fill="#2a2a2a" text-anchor="middle">10</text>
<text transform="translate(15.3,302.08) scale(1,1.08)" font-size="14" fill="#2a2a2a" text-anchor="middle">11</text>
<text transform="translate(15.3,323.86) scale(1,1.08)" font-size="14" fill="#2a2a2a" text-anchor="middle">12</text>
<text transform="translate(15.3,345.64) scale(1,1.08)" font-size="14" fill="#2a2a2a" text-anchor="middle">13</text>
<text transform="translate(15.3,367.42) scale(1,1.08)" font-size="14" fill="#2a2a2a" text-anchor="middle">14</text>
<text transform="translate(15.3,389.20) scale(1,1.08)" font-size="14" fill="#2a2a2a" text-anchor="middle">15</text>
<text transform="translate(15.3,410.98) scale(1,1.08)" font-size="14" fill="#2a2a2a" text-anchor="middle">16</text>
<text transform="translate(15.3,432.76) scale(1,1.08)" font-size="14" fill="#2a2a2a" text-anchor="middle">17</text>
<text transform="translate(15.3,454.54) scale(1,1.08)" font-size="14" fill="#2a2a2a" text-anchor="middle">18</text>
<text transform="translate(15.3,476.32) scale(1,1.08)" font-size="14" fill="#2a2a2a" text-anchor="middle">19</text>
<text transform="translate(15.3,498.10) scale(1,1.08)" font-size="14" fill="#2a2a2a" text-anchor="middle">20</text>
<text transform="translate(15.3,519.88) scale(1,1.08)" font-size="14" fill="#2a2a2a" text-anchor="middle">21</text>
<text x="199.8" y="106.16" font-size="14" fill="#111" stroke="#111" stroke-width="0.15" text-anchor="end">5,3</text>
<text x="199.8" y="127.94" font-size="14" fill="#111" stroke="#111" stroke-width="0.15" text-anchor="end">4,3</text>
<text x="199.8" y="149.72" font-size="14" fill="#111" stroke="#111" stroke-width="0.15" text-anchor="end">3,2</text>
<text x="199.8" y="171.50" font-size="14" fill="#111" stroke="#111" stroke-width="0.15" text-anchor="end">5,7</text>
<text x="199.8" y="193.28" font-size="14" fill="#111" stroke="#111" stroke-width="0.15" text-anchor="end">4,6</text>
<text x="199.8" y="215.06" font-size="14" fill="#111" stroke="#111" stroke-width="0.15" text-anchor="end">3,2</text>
<text x="199.8" y="236.84" font-size="14" fill="#111" stroke="#111" stroke-width="0.15" text-anchor="end">5,2</text>
<text x="199.8" y="258.62" font-size="14" fill="#111" stroke="#111" stroke-width="0.15" text-anchor="end">5,0</text>
<text x="199.8" y="280.40" font-size="14" fill="#111" stroke="#111" stroke-width="0.15" text-anchor="end">4,8</text>
<text x="199.8" y="302.18" font-size="14" fill="#111" stroke="#111" stroke-width="0.15" text-anchor="end">4,9</text>
<text x="199.8" y="323.96" font-size="14" fill="#111" stroke="#111" stroke-width="0.15" text-anchor="end">5,1</text>
<text x="199.8" y="345.74" font-size="14" fill="#111" stroke="#111" stroke-width="0.15" text-anchor="end">4,9</text>
<text x="199.8" y="367.52" font-size="14" fill="#111" stroke="#111" stroke-width="0.15" text-anchor="end">4,7</text>
<text x="199.8" y="389.30" font-size="14" fill="#111" stroke="#111" stroke-width="0.15" text-anchor="end">4,6</text>
<text x="199.8" y="411.08" font-size="14" fill="#111" stroke="#111" stroke-width="0.15" text-anchor="end">4,9</text>
<text x="199.8" y="432.86" font-size="14" fill="#111" stroke="#111" stroke-width="0.15" text-anchor="end">4,9</text>
<text x="199.8" y="454.64" font-size="14" fill="#111" stroke="#111" stroke-width="0.15" text-anchor="end">5,0</text>
<text x="199.8" y="476.42" font-size="14" fill="#111" stroke="#111" stroke-width="0.15" text-anchor="end">4,9</text>
<text x="199.8" y="498.20" font-size="14" fill="#111" stroke="#111" stroke-width="0.15" text-anchor="end">4,9</text>
<text x="199.8" y="519.98" font-size="14" fill="#111" stroke="#111" stroke-width="0.15" text-anchor="end">5,0</text>
<text x="33.8" y="84.78" font-size="14" fill="#111" stroke="#111" stroke-width="0.15" textLength="171" lengthAdjust="spacingAndGlyphs">Mesure de LDL (mmol / L)</text>
<text x="473.8" y="106.16" font-size="14" fill="#111" stroke="#111" stroke-width="0.15" text-anchor="end" xml:space="preserve" textLength="94.5" lengthAdjust="spacingAndGlyphs">Moyenne  LDL</text>
<text x="473.8" y="127.94" font-size="14" fill="#111" stroke="#111" stroke-width="0.15" text-anchor="end" xml:space="preserve" textLength="115" lengthAdjust="spacingAndGlyphs">Ecart type de LDL</text>
<text x="473.8" y="171.50" font-size="14" fill="#111" stroke="#111" stroke-width="0.15" text-anchor="end" xml:space="preserve" textLength="59" lengthAdjust="spacingAndGlyphs">Mon LDL</text>
<text x="473.8" y="193.28" font-size="14" fill="#111" stroke="#111" stroke-width="0.15" text-anchor="end" xml:space="preserve" textLength="165" lengthAdjust="spacingAndGlyphs">Mon LDL en écarts-types</text>
<text x="546.2" y="106.16" font-size="14" fill="#111" stroke="#111" stroke-width="0.15" text-anchor="end" xml:space="preserve">4,8</text>
<text x="546.2" y="127.94" font-size="14" fill="#111" stroke="#111" stroke-width="0.15" text-anchor="end" xml:space="preserve">0,6</text>
<text x="546.2" y="171.50" font-size="14" fill="#111" stroke="#111" stroke-width="0.15" text-anchor="end" xml:space="preserve">5,6</text>
<text x="546.2" y="193.28" font-size="14" fill="#111" stroke="#111" stroke-width="0.15" text-anchor="end" xml:space="preserve">1,41</text>
<rect x="29.3" y="66.6" width="174.89999999999998" height="1.9" fill="#217346"/>
<rect x="29.3" y="66.6" width="2" height="23.60000000000001" fill="#217346"/>
<rect x="29.3" y="88.4" width="171.2" height="1.9" fill="#217346"/>
<rect x="202.6" y="66.6" width="1.5" height="22.400000000000006" fill="#4f5f55"/>
<rect x="200.6" y="88.9" width="4.6" height="2.8" fill="#217346"/>
</svg></body></html>
